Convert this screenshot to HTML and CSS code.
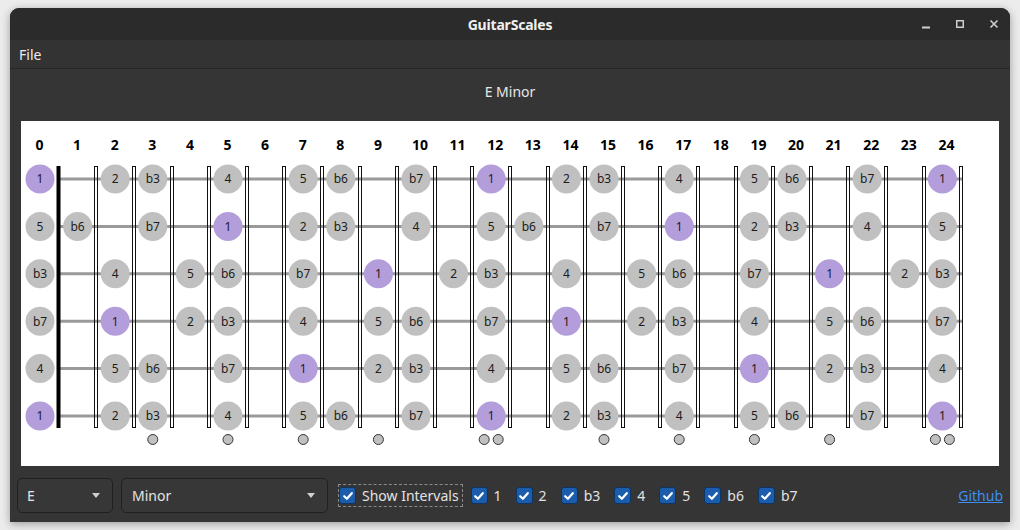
FILE: index.html
```html
<!DOCTYPE html>
<html>
<head>
<meta charset="utf-8">
<link rel="stylesheet" href="styles.css">
</head>
<body>
<div class="window">
  <div class="titlebar">
    <div class="title">GuitarScales</div>
    <div class="wincontrols">
      <svg class="wc" width="12" height="12" viewBox="0 0 12 12"><rect x="2" y="7.5" width="8" height="2" fill="#cfcfcf"/></svg>
      <svg class="wc" width="12" height="12" viewBox="0 0 12 12"><rect x="2.75" y="1.75" width="6.5" height="6.5" fill="none" stroke="#cfcfcf" stroke-width="1.5"/></svg>
      <svg class="wc" width="12" height="12" viewBox="0 0 12 12"><path d="M2.5 1.5 L9.5 8.5 M9.5 1.5 L2.5 8.5" stroke="#cfcfcf" stroke-width="1.6"/></svg>
    </div>
  </div>
  <div class="menubar"><span class="menuitem">File</span></div>
  <div class="content">
    <div class="heading">E Minor</div>
    <div class="board">
      <svg id="board" width="978" height="345" viewBox="21 121 978 345"></svg>
    </div>
    <div class="controls">
      <div class="combo combo-key"><span>E</span><span class="arrow"></span></div>
      <div class="combo combo-scale"><span>Minor</span><span class="arrow"></span></div>
      <label class="check focus"><span class="box"><svg width="12" height="12" viewBox="0 0 12 12"><path d="M2.2 6.2 L4.9 8.8 L9.8 3.2" fill="none" stroke="#fff" stroke-width="2.2" stroke-linecap="round" stroke-linejoin="round"/></svg></span><span>Show Intervals</span></label>
      <div class="intervals">
        <label class="check"><span class="box"><svg width="12" height="12" viewBox="0 0 12 12"><path d="M2.2 6.2 L4.9 8.8 L9.8 3.2" fill="none" stroke="#fff" stroke-width="2.2" stroke-linecap="round" stroke-linejoin="round"/></svg></span><span>1</span></label>
        <label class="check"><span class="box"><svg width="12" height="12" viewBox="0 0 12 12"><path d="M2.2 6.2 L4.9 8.8 L9.8 3.2" fill="none" stroke="#fff" stroke-width="2.2" stroke-linecap="round" stroke-linejoin="round"/></svg></span><span>2</span></label>
        <label class="check"><span class="box"><svg width="12" height="12" viewBox="0 0 12 12"><path d="M2.2 6.2 L4.9 8.8 L9.8 3.2" fill="none" stroke="#fff" stroke-width="2.2" stroke-linecap="round" stroke-linejoin="round"/></svg></span><span>b3</span></label>
        <label class="check"><span class="box"><svg width="12" height="12" viewBox="0 0 12 12"><path d="M2.2 6.2 L4.9 8.8 L9.8 3.2" fill="none" stroke="#fff" stroke-width="2.2" stroke-linecap="round" stroke-linejoin="round"/></svg></span><span>4</span></label>
        <label class="check"><span class="box"><svg width="12" height="12" viewBox="0 0 12 12"><path d="M2.2 6.2 L4.9 8.8 L9.8 3.2" fill="none" stroke="#fff" stroke-width="2.2" stroke-linecap="round" stroke-linejoin="round"/></svg></span><span>5</span></label>
        <label class="check"><span class="box"><svg width="12" height="12" viewBox="0 0 12 12"><path d="M2.2 6.2 L4.9 8.8 L9.8 3.2" fill="none" stroke="#fff" stroke-width="2.2" stroke-linecap="round" stroke-linejoin="round"/></svg></span><span>b6</span></label>
        <label class="check"><span class="box"><svg width="12" height="12" viewBox="0 0 12 12"><path d="M2.2 6.2 L4.9 8.8 L9.8 3.2" fill="none" stroke="#fff" stroke-width="2.2" stroke-linecap="round" stroke-linejoin="round"/></svg></span><span>b7</span></label>
      </div>
      <a class="github" href="#">Github</a>
    </div>
  </div>
</div>
<script src="script.js"></script>
</body>
</html>
```
FILE: styles.css
```css
* { box-sizing: border-box; }
html, body { margin: 0; padding: 0; }
body {
  background: #ececec;
  width: 1020px;
  height: 530px;
  overflow: hidden;
  font-family: "Noto Sans", "DejaVu Sans", sans-serif;
  font-size: 14px;
  color: #e2e2e2;
}
.window {
  margin: 8px 10px 0 10px;
  width: 1000px;
  height: 514px;
  background: #353535;
  border-radius: 9px 9px 0 0;
  box-shadow: 0 2px 9px rgba(0,0,0,0.35);
  display: flex;
  flex-direction: column;
  overflow: hidden;
}
.titlebar {
  height: 32px;
  background: #2b2b2b;
  display: flex;
  align-items: center;
  justify-content: center;
  position: relative;
}
.title {
  font-weight: 700;
  font-size: 14px;
  color: #f0f0f0;
  letter-spacing: -0.2px;
}
.wincontrols {
  position: absolute;
  right: 10px;
  top: 11px;
  display: flex;
  gap: 22px;
}
.wc { display: block; }
.menubar {
  height: 29px;
  background: #333333;
  border-bottom: 1px solid #262626;
  display: flex;
  align-items: center;
  padding-left: 9px;
}
.menuitem { color: #ececec; font-size: 14px; }
.content {
  flex: 1;
  display: flex;
  flex-direction: column;
}
.heading {
  height: 52px;
  display: flex;
  align-items: center;
  justify-content: center;
  color: #e8e8e8;
  font-size: 14px;
  padding-bottom: 7px;
}
.board {
  margin: 0 11px;
  height: 345px;
  background: #ffffff;
}
.board svg { display: block; }
.string { stroke: #9a9a9a; stroke-width: 3; }
.nut { fill: #000; }
.fret { fill: none; stroke: #111; stroke-width: 1; }
.dot { fill: #c0c0c0; }
.dot.root { fill: #b39ddb; }
.dotlabel {
  font-family: "Noto Sans", "DejaVu Sans", sans-serif;
  font-size: 12px;
  fill: #1c1c1c;
  text-anchor: middle;
}
.fretnum {
  font-family: "Noto Sans", "DejaVu Sans", sans-serif;
  font-size: 14px;
  font-weight: 700;
  fill: #000;
  text-anchor: middle;
}
.inlay { fill: #c0c0c0; stroke: #333; stroke-width: 1; }
.controls {
  display: flex;
  align-items: center;
  padding: 12px 7px 0 7px;
  height: 47px;
}
.combo {
  height: 35px;
  border: 1px solid #202020;
  border-radius: 5px;
  background: #373737;
  display: flex;
  align-items: center;
  justify-content: space-between;
  padding: 0 12px 0 9px;
  color: #e4e4e4;
  font-size: 14px;
}
.combo-key { width: 96px; }
.combo-scale { width: 207px; margin-left: 8px; padding-left: 10px; }
.arrow {
  width: 0; height: 0;
  border-left: 4.5px solid transparent;
  border-right: 4.5px solid transparent;
  border-top: 5px solid #d0d0d0;
}
.check {
  display: inline-flex;
  align-items: center;
  gap: 6px;
  color: #e2e2e2;
  font-size: 14px;
}
.check.focus {
  margin-left: 10px;
  height: 23px;
  border: 1px dashed #8a8a8a;
  padding: 0 3px 0 0;
}
.box {
  width: 17px;
  height: 17px;
  border-radius: 3px;
  background: #1b5cac;
  border: 1px solid #0e3462;
  display: flex;
  align-items: center;
  justify-content: center;
}
.box svg { display: block; }
.intervals {
  display: flex;
  gap: 14px;
  margin-left: 8px;
}
.github {
  margin-left: auto;
  color: #3d8ef0;
  text-decoration: underline;
  font-size: 14px;
}
```
FILE: script.js
```js
(function () {
  var NS = 'http://www.w3.org/2000/svg';
  var svg = document.getElementById('board');
  function X(n) { return 40 + 37.6 * n; }
  function Y(i) { return 179 + 47.4 * i; }
  function el(tag, attrs, text) {
    var e = document.createElementNS(NS, tag);
    for (var k in attrs) e.setAttribute(k, attrs[k]);
    if (text != null) e.textContent = text;
    svg.appendChild(e);
    return e;
  }
  // fret numbers
  for (var n = 0; n <= 24; n++) {
    el('text', { x: n >= 10 ? X(n) + 4 : X(n) - 0.5, y: 150, 'class': 'fretnum' }, String(n));
  }
  // strings
  for (var i = 0; i < 6; i++) {
    el('line', { x1: 58, x2: 963, y1: Y(i), y2: Y(i), 'class': 'string' });
  }
  // nut
  el('rect', { x: 56.5, y: 166, width: 4, height: 262, 'class': 'nut' });
  // frets
  for (var f = 1; f <= 24; f++) {
    var c = Math.round(X(f + 0.5));
    el('rect', { x: c - 1.5, y: 166.5, width: 3, height: 261, 'class': 'fret' });
  }
  // notes
  var open = [0, 7, 3, 10, 5, 0];
  var map = { 0: '1', 2: '2', 3: 'b3', 5: '4', 7: '5', 8: 'b6', 10: 'b7' };
  for (var s = 0; s < 6; s++) {
    for (var m = 0; m <= 24; m++) {
      var semi = (open[s] + m) % 12;
      if (map.hasOwnProperty(semi)) {
        var lab = map[semi];
        el('circle', { cx: X(m), cy: Y(s), r: 14.5, 'class': 'dot' + (lab === '1' ? ' root' : '') });
        el('text', { x: X(m), y: Y(s) + 4.3, 'class': 'dotlabel' }, lab);
      }
    }
  }
  // inlays
  var singles = [3, 5, 7, 9, 15, 17, 19, 21];
  singles.forEach(function (q) { el('circle', { cx: X(q), cy: 439.5, r: 5, 'class': 'inlay' }); });
  [12, 24].forEach(function (q) {
    el('circle', { cx: X(q) - 7, cy: 439.5, r: 5, 'class': 'inlay' });
    el('circle', { cx: X(q) + 7, cy: 439.5, r: 5, 'class': 'inlay' });
  });
})();
```
